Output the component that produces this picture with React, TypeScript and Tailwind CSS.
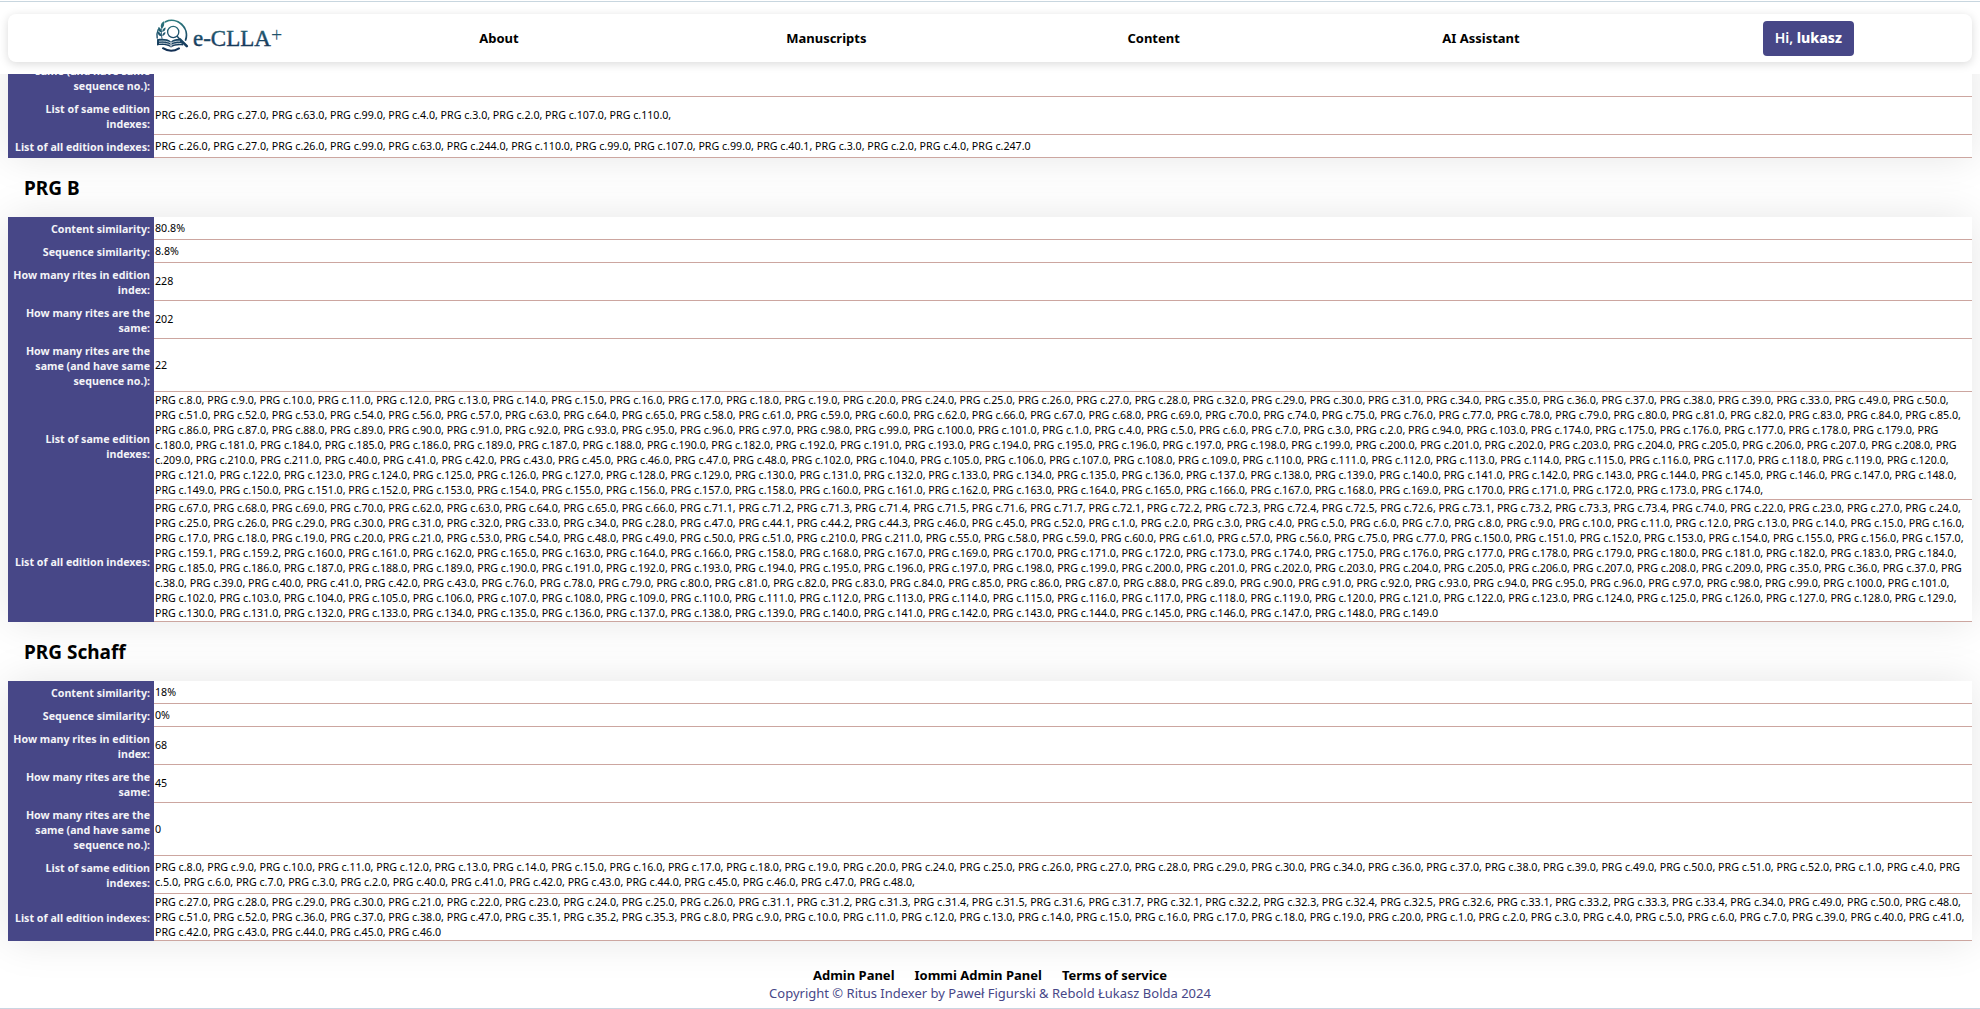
import React from "react";

/** Expands "8-10 71.1-71.2" into "PRG c.8.0, PRG c.9.0, ..., PRG c.71.2". */
function indexes(spec: string, trailing = false): string {
  const out: string[] = [];
  for (const token of spec.split(" ")) {
    const [from, to = from] = token.split("-");
    const [a, sub] = from.split(".").map(Number);
    const [b, subTo] = to.split(".").map(Number);
    if (sub !== undefined) {
      for (let s = sub; s <= subTo; s++) out.push(`PRG c.${a}.${s}`);
    } else {
      for (let n = a; n <= b; n++) out.push(`PRG c.${n}.0`);
    }
  }
  return out.join(", ") + (trailing ? "," : "");
}

const LABELS = [
  "Content similarity:",
  "Sequence similarity:",
  "How many rites in edition index:",
  "How many rites are the same:",
  "How many rites are the same (and have same sequence no.):",
  "List of same edition indexes:",
  "List of all edition indexes:",
];

const FIRST = [
  "",
  indexes("26 27 63 99 4 3 2 107 110", true),
  indexes("26 27 26 99 63 244 110 99 107 99 40.1 3 2 4 247"),
];

const PRG_B = [
  "80.8%",
  "8.8%",
  "228",
  "202",
  "22",
  indexes(
    "8-20 24-28 32 29-31 34-39 33 49-54 56 57 63-65 58 61 59 60 62 66-70 74-93 95-101 1 4-7 3 2 94 103 174-181 184-186 189 187 188 190 182 192 191 193-211 40-43 45-48 102 104-158 160-174",
    true,
  ),
  indexes(
    "67-70 62-66 71.1-71.7 72.1-72.6 73.1-73.4 74 22 23 27 24-26 29-34 28 47 44.1-44.3 46 45 52 1-21 53 54 48-51 210 211 55 58-61 57 56 75 77 150-157 159.1-159.2 160-162 165 163 164 166 158 168 167 169-209 35-43 76 78-149",
  ),
];

const PRG_SCHAFF = [
  "18%",
  "0%",
  "68",
  "45",
  "0",
  indexes("8-20 24-30 34 36-39 49-52 1 4-7 3 2 40-48", true),
  indexes(
    "27-30 21-26 31.1-31.7 32.1-32.6 33.1-33.4 34 49 50 48 51 52 36-38 47 35.1-35.3 8-20 1-7 39-46",
  ),
];

function EditionTable({ labels, values }: { labels: string[]; values: string[] }) {
  return (
    <table className="w-full border-separate border-spacing-0 bg-white text-[8pt] leading-[15px] shadow-[0_0_40px_rgba(0,0,0,0.1)]">
      <tbody>
        {labels.map((label, i) => (
          <tr key={label}>
            <th
              scope="row"
              className="w-[146px] bg-[#474787] px-1 pt-[5px] pb-[3px] text-right align-middle font-bold text-[#f3f3f7]"
            >
              {label}
            </th>
            <td
              className={
                i === labels.length - 1
                  ? "border-b border-[#cca6a0] px-px pt-px align-middle"
                  : "border-b border-[#cca6a0] p-px align-middle"
              }
            >
              {values[i]}
            </td>
          </tr>
        ))}
      </tbody>
    </table>
  );
}

function Heading({ children }: { children: React.ReactNode }) {
  return (
    <h2 className="flex h-[59px] items-center px-4 pt-0.5 text-[19px] font-bold">{children}</h2>
  );
}

function Logo() {
  return (
    <svg viewBox="0 0 128 34" className="h-[34px] w-[128px]" role="img" aria-label="e-CLLA+">
      <defs>
        <linearGradient id="ink" x1="0" y1="0" x2="0" y2="34" gradientUnits="userSpaceOnUse">
          <stop offset="0" stopColor="#2f7f80" />
          <stop offset="0.5" stopColor="#1d4f6b" />
          <stop offset="1" stopColor="#102a50" />
        </linearGradient>
      </defs>
      <g fill="none" stroke="url(#ink)" strokeLinecap="round">
        <path d="M10.500 2.700A14.800 14.800 0 0 1 30.600 21" strokeWidth="1.8" />
        <path d="M2.200 19A14.800 14.800 0 0 1 3.200 10.500" strokeWidth="1.4" />
        <path d="M8 29.2A15 15 0 0 0 24 29.400" strokeWidth="2" />
        <circle cx="18.200" cy="13" r="5.6" strokeWidth="1.3" />
        <path d="M22.400 17.500l2.6 2.9" strokeWidth="1.5" />
        <path d="M25 20.4l6.8 6.8" strokeWidth="2.6" />
        <path d="M7 19.5C6 15 6 8 9 3.5" strokeWidth="0.9" />
      </g>
      <g fill="url(#ink)">
        <path d="M9 2.2C5.6 4 5 7 6.6 9.6 9 8 9.8 5 9 2.2z" />
        <path d="M6.4 13.4C3 12.6 2.6 9.8 3.6 8c2 .8 3 3 2.800 5.400zM6.600 17.400c-3.200-.4-4.200-2.600-3.600-4.800 2 .6 3.400 2.600 3.600 4.800zM7.200 13c.2-2.400 1.400-4 3.400-4.400.2 2.200-1 4-3.400 4.400zM7.200 17c.2-2.400 1.400-3.600 3.200-4 .2 2-1 3.600-3.200 4z" />
        <path d="M2 20.200c5-.8 11-.6 14 2.200 2-1.800 4.600-2.600 7.600-2.600l4.400 4.800.2 1.800c-5-.6-9-.2-12.200 2-3.800-2.400-9-2.600-14-2z" />
      </g>
      <g fill="none" stroke="#fff" strokeWidth="0.7">
        <path d="M4 22.200c4.500-.5 9 0 12 2 2-1.400 5-2.200 9-2" />
        <path d="M4 24.400c4.500-.5 9 0 12 2 2.500-1.500 6-2.200 10.500-1.900" />
        <path d="M16 22.500v5.600" />
      </g>
      <g
        fill="url(#ink)"
        stroke="url(#ink)"
        strokeWidth="0.4"
        fontFamily='"Liberation Serif", serif'
        fontWeight="400"
      >
        <text x="38" y="27" fontSize="23">
          e-CLLA
        </text>
        <text x="116" y="23" fontSize="20" strokeWidth="0">
          +
        </text>
      </g>
    </svg>
  );
}

const NAV = ["About", "Manuscripts", "Content", "AI Assistant"];
const FOOTER = ["Admin Panel", "Iommi Admin Panel", "Terms of service"];

export default function App() {
  return (
    <div className="flex min-h-screen flex-col border-b border-[#cbd5e1] bg-white font-['Noto_Sans',sans-serif] text-[13px] text-black">
      <header className="sticky top-0 z-10 bg-white px-2 pt-px pb-3">
        <div className="-mx-2 mb-3 border-t border-[#c8d6df]" />
        <nav className="grid h-12 grid-cols-6 items-center rounded-lg bg-white font-bold shadow-[0_2px_10px_rgba(0,0,0,0.15)]">
          <a href="#home" className="ml-[147px] pb-1">
            <Logo />
          </a>
          {NAV.map((item) => (
            <a key={item} href={`#${item}`} className="justify-self-center pt-0.5">
              {item}
            </a>
          ))}
          <button
            type="button"
            className="h-[35px] justify-self-center rounded-sm bg-[#474787] px-3 text-sm font-semibold text-white"
          >
            Hi, <b className="font-extrabold">lukasz</b>
          </button>
        </nav>
      </header>

      <main className="-mt-[30px] px-2">
        <EditionTable labels={LABELS.slice(4)} values={FIRST} />
        <Heading>PRG B</Heading>
        <EditionTable labels={LABELS} values={PRG_B} />
        <Heading>PRG Schaff</Heading>
        <EditionTable labels={LABELS} values={PRG_SCHAFF} />
      </main>

      <footer className="mt-auto pb-1.5 text-center leading-[18px]">
        <div className="flex justify-center gap-5 font-bold">
          {FOOTER.map((item) => (
            <a key={item} href={`#${item}`}>
              {item}
            </a>
          ))}
        </div>
        <p className="text-[#474787]">
          Copyright © Ritus Indexer by Paweł Figurski &amp; Rebold Łukasz Bolda 2024
        </p>
      </footer>
    </div>
  );
}
